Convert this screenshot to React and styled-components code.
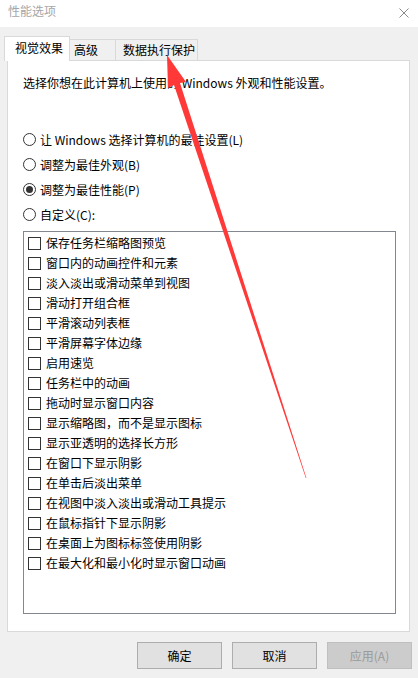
import React, { useState } from 'react';
import styled, { createGlobalStyle } from 'styled-components';

const GlobalStyle = createGlobalStyle`
  html, body {
    margin: 0;
    padding: 0;
    background: #f0f0f0;
  }
  body {
    font-family: "Noto Sans CJK SC", "Noto Sans", sans-serif;
    font-size: 12px;
    color: #000;
  }
`;

const Window = styled.div`
  position: relative;
  width: 418px;
  height: 678px;
  overflow: hidden;
  background: #f0f0f0;
  display: flex;
  flex-direction: column;
`;

const TitleBar = styled.div`
  height: 27px;
  background: #fff;
  display: flex;
  align-items: center;
  justify-content: space-between;
  padding: 0 8px 5px 8px;
  box-sizing: border-box;
  color: #a6a6a6;
  font-size: 12px;
  line-height: 16px;
`;

const CloseButton = styled.div`
  width: 10px;
  height: 10px;
  margin-right: 1px;
  margin-top: 3px;
  display: flex;
`;

const Body = styled.div`
  flex: 1;
  display: flex;
  flex-direction: column;
  padding: 9px 6px 0 4px;
`;

const TabRow = styled.div`
  display: flex;
  align-items: flex-end;
  height: 25px;
  position: relative;
  z-index: 1;
`;

const Tab = styled.div`
  box-sizing: border-box;
  width: ${(p) => p.$width}px;
  height: ${(p) => (p.$active ? 25 : 22)}px;
  padding-left: ${(p) => p.$pad}px;
  border: 1px solid #d9d9d9;
  border-bottom: ${(p) => (p.$active ? 'none' : '1px solid #d9d9d9')};
  border-left: ${(p) => (p.$first || p.$active ? '1px solid #d9d9d9' : 'none')};
  background: ${(p) => (p.$active ? '#fff' : '#f0f0f0')};
  margin-right: ${(p) => (p.$active ? -2 : 0)}px;
  font-size: 12px;
  line-height: ${(p) => (p.$active ? 22 : 20)}px;
  color: #000;
  white-space: nowrap;
  position: relative;
  z-index: ${(p) => (p.$active ? 2 : 1)};
`;

const Panel = styled.div`
  box-sizing: border-box;
  margin-left: 3px;
  margin-top: -1px;
  width: 403px;
  height: 572px;
  background: #fff;
  border: 1px solid #d9d9d9;
  padding: 14px 13px 0 15px;
  display: flex;
  flex-direction: column;
`;

const Description = styled.div`
  line-height: 16px;
  height: 16px;
  margin-bottom: 36px;
  white-space: nowrap;
`;

const RadioGroup = styled.div`
  display: flex;
  flex-direction: column;
`;

const RadioRow = styled.label`
  display: flex;
  align-items: center;
  height: 25px;
  gap: 4px;
  white-space: nowrap;
  line-height: 16px;
`;

const RadioCircle = styled.span`
  box-sizing: border-box;
  width: 13px;
  height: 13px;
  border-radius: 50%;
  border: 1px solid #333;
  display: flex;
  align-items: center;
  justify-content: center;
  &::after {
    content: '';
    width: 7px;
    height: 7px;
    border-radius: 50%;
    background: ${(p) => (p.$checked ? '#333' : 'transparent')};
  }
`;

const ListBox = styled.div`
  box-sizing: border-box;
  margin-top: 4px;
  height: 383px;
  border: 1px solid #828790;
  padding: 1px 0 0 4px;
  display: flex;
  flex-direction: column;
`;

const CheckRow = styled.label`
  display: flex;
  align-items: center;
  height: 20px;
  gap: 5px;
  line-height: 16px;
  white-space: nowrap;
`;

const CheckBox = styled.span`
  box-sizing: border-box;
  width: 13px;
  height: 13px;
  border: 1px solid #333;
  background: #fff;
  flex-shrink: 0;
`;

const ButtonRow = styled.div`
  display: flex;
  justify-content: flex-end;
  gap: 10px;
  margin-top: 10px;
`;

const Button = styled.div`
  box-sizing: border-box;
  width: 85px;
  height: 27px;
  display: flex;
  align-items: center;
  justify-content: center;
  background: ${(p) => (p.$disabled ? '#cccccc' : '#e1e1e1')};
  border: 1px solid ${(p) => (p.$disabled ? '#bfbfbf' : '#adadad')};
  color: ${(p) => (p.$disabled ? '#9a9a9a' : '#000')};
  font-size: 12px;
  line-height: 16px;
`;

const ArrowLayer = styled.svg`
  position: absolute;
  left: 0;
  top: 0;
  pointer-events: none;
  z-index: 10;
`;

const options = [
  '保存任务栏缩略图预览',
  '窗口内的动画控件和元素',
  '淡入淡出或滑动菜单到视图',
  '滑动打开组合框',
  '平滑滚动列表框',
  '平滑屏幕字体边缘',
  '启用速览',
  '任务栏中的动画',
  '拖动时显示窗口内容',
  '显示缩略图，而不是显示图标',
  '显示亚透明的选择长方形',
  '在窗口下显示阴影',
  '在单击后淡出菜单',
  '在视图中淡入淡出或滑动工具提示',
  '在鼠标指针下显示阴影',
  '在桌面上为图标标签使用阴影',
  '在最大化和最小化时显示窗口动画',
];

const radios = [
  '让 Windows 选择计算机的最佳设置(L)',
  '调整为最佳外观(B)',
  '调整为最佳性能(P)',
  '自定义(C):',
];

export default function App() {
  const [mode] = useState(2);
  return (
    <Window>
      <GlobalStyle />
      <TitleBar>
        <span>性能选项</span>
        <CloseButton>
          <svg width="10" height="10" viewBox="0 0 10 10">
            <path d="M0.5 0.5 L9.5 9.5 M9.5 0.5 L0.5 9.5" stroke="#8a8a8a" strokeWidth="1" />
          </svg>
        </CloseButton>
      </TitleBar>
      <Body>
        <TabRow>
          <Tab $active $first $width={66} $pad={10}>视觉效果</Tab>
          <Tab $width={48} $pad={6}>高级</Tab>
          <Tab $width={82} $pad={7}>数据执行保护</Tab>
        </TabRow>
        <Panel>
          <Description>选择你想在此计算机上使用的 Windows 外观和性能设置。</Description>
          <RadioGroup>
            {radios.map((r, i) => (
              <RadioRow key={r}>
                <RadioCircle $checked={i === mode} />
                {r}
              </RadioRow>
            ))}
          </RadioGroup>
          <ListBox>
            {options.map((o) => (
              <CheckRow key={o}>
                <CheckBox />
                {o}
              </CheckRow>
            ))}
          </ListBox>
        </Panel>
        <ButtonRow>
          <Button>确定</Button>
          <Button>取消</Button>
          <Button $disabled>应用(A)</Button>
        </ButtonRow>
      </Body>
      <ArrowLayer width="418" height="678" viewBox="0 0 418 678">
        <polygon
          points="167,55 186,82 180,83 306.4,478 305.8,478 174,85 168,88"
          fill="#ff3838"
        />
      </ArrowLayer>
    </Window>
  );
}
